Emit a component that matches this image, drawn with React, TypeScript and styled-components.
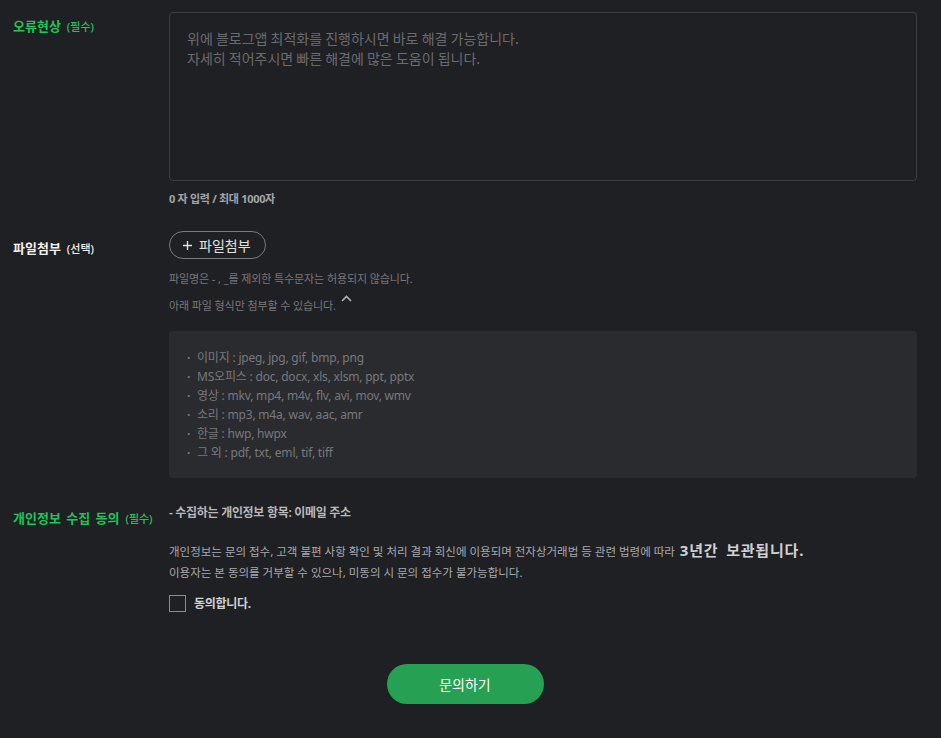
import React from "react";
import styled, { createGlobalStyle } from "styled-components";

const GlobalStyle = createGlobalStyle`
  html, body {
    margin: 0;
    padding: 0;
    background: #1f2023;
  }
  body {
    font-family: "Noto Sans", "Noto Sans CJK KR", sans-serif;
  }
`;

const Page = styled.div`
  width: 941px;
  height: 738px;
  box-sizing: border-box;
  padding: 12px 24px 0 13px;
  background: #1f2023;
  overflow: hidden;
`;

const Row = styled.div<{ $gap?: number }>`
  display: grid;
  grid-template-columns: 156px 1fr;
  margin-bottom: ${(p) => p.$gap ?? 0}px;
`;

const Label = styled.div<{ $green?: boolean; $top?: number }>`
  padding-top: ${(p) => p.$top ?? 0}px;
  font-size: 13px;
  font-weight: 700;
  color: ${(p) => (p.$green ? "#1fc45a" : "#f1f1f1")};
  word-spacing: 2px;
  white-space: nowrap;
`;

const Tag = styled.span`
  font-size: 11px;
  font-weight: 500;
  margin-left: 6px;
`;

const Field = styled.div`
  display: flex;
  flex-direction: column;
`;

const TextArea = styled.div`
  height: 169px;
  box-sizing: border-box;
  border: 1px solid #3d3e42;
  border-radius: 4px;
  padding: 15px 17px;
  font-family: "Noto Sans CJK KR", sans-serif;
  font-size: 14px;
  line-height: 20px;
  color: #6a6b6e;
`;

const Counter = styled.div`
  margin-top: 9px;
  font-size: 11px;
  font-weight: 700;
  color: #a4a5a8;
  letter-spacing: -0.3px;
`;

const AttachButton = styled.button`
  align-self: flex-start;
  height: 28px;
  margin-top: -2px;
  padding: 0 14px 0 12px;
  border: 1px solid #7a7b7e;
  border-radius: 14px;
  background: transparent;
  color: #e4e4e4;
  font-family: "Noto Sans CJK KR", sans-serif;
  font-size: 14px;
  display: flex;
  align-items: center;
  gap: 6px;
`;

const Hint = styled.div<{ $top: number }>`
  margin-top: ${(p) => p.$top}px;
  font-size: 11px;
  color: #77787b;
  letter-spacing: -0.1px;
  display: flex;
  align-items: center;
`;

const Caret = styled.svg`
  margin-left: 5px;
  margin-top: -14px;
`;

const FormatBox = styled.ul`
  list-style: none;
  margin: 18px 0 0;
  padding: 17px 18px 16px;
  background: #2a2b2f;
  border-radius: 4px;
  display: flex;
  flex-direction: column;
`;

const FormatItem = styled.li`
  font-size: 12px;
  line-height: 19px;
  color: #77787b;
  letter-spacing: -0.2px;
  &::before {
    content: "·";
    display: inline-block;
    width: 10px;
    font-weight: 700;
  }
`;

const Collected = styled.div`
  padding-top: 2px;
  font-size: 12px;
  font-weight: 600;
  color: #b8b9bc;
  letter-spacing: -0.3px;
`;

const Notice = styled.div`
  margin-top: 19px;
  font-size: 11.5px;
  line-height: 21px;
  color: #a8a9ac;
`;

const Strong = styled.span`
  font-size: 15px;
  font-weight: 700;
  color: #d0d1d4;
  margin-left: 5px;
  letter-spacing: 0.8px;
  word-spacing: 3px;
`;

const CheckRow = styled.label`
  margin-top: 11px;
  display: flex;
  align-items: center;
  gap: 8px;
  font-size: 12px;
  font-weight: 700;
  color: #d0d1d4;
  letter-spacing: -0.3px;
`;

const CheckBox = styled.span`
  width: 15px;
  height: 15px;
  border: 1px solid #8a8b8e;
  display: inline-block;
`;

const Footer = styled.div`
  display: flex;
  justify-content: center;
  margin-top: 52px;
`;

const SubmitButton = styled.button`
  width: 157px;
  height: 40px;
  border: none;
  border-radius: 20px;
  background: #26a052;
  color: #ffffff;
  font-family: "Noto Sans CJK KR", sans-serif;
  font-size: 14px;
`;

const formats = [
  "이미지 : jpeg, jpg, gif, bmp, png",
  "MS오피스 : doc, docx, xls, xlsm, ppt, pptx",
  "영상 : mkv, mp4, m4v, flv, avi, mov, wmv",
  "소리 : mp3, m4a, wav, aac, amr",
  "한글 : hwp, hwpx",
  "그 외 : pdf, txt, eml, tif, tiff",
];

const App = () => {
  return (
    <Page>
      <GlobalStyle />
      <Row $gap={27}>
        <Label $green $top={4}>
          오류현상<Tag>(필수)</Tag>
        </Label>
        <Field>
          <TextArea>
            위에 블로그앱 최적화를 진행하시면 바로 해결 가능합니다.
            <br />
            자세히 적어주시면 빠른 해결에 많은 도움이 됩니다.
          </TextArea>
          <Counter>0 자 입력 / 최대 1000자</Counter>
        </Field>
      </Row>

      <Row $gap={23}>
        <Label $top={5}>
          파일첨부<Tag>(선택)</Tag>
        </Label>
        <Field>
          <AttachButton>
            <svg width="11" height="11" viewBox="0 0 11 11">
              <path d="M5.5 1v9M1 5.5h9" stroke="#e4e4e4" strokeWidth="1.3" />
            </svg>
            파일첨부
          </AttachButton>
          <Hint $top={11}>파일명은 - , _를 제외한 특수문자는 허용되지 않습니다.</Hint>
          <Hint $top={11}>
            아래 파일 형식만 첨부할 수 있습니다.
            <Caret width="11" height="7" viewBox="0 0 11 7">
              <path d="M1 6l4.5-4.5L10 6" fill="none" stroke="#b0b1b4" strokeWidth="1.6" />
            </Caret>
          </Hint>
          <FormatBox>
            {formats.map((f) => (
              <FormatItem key={f}>{f}</FormatItem>
            ))}
          </FormatBox>
        </Field>
      </Row>

      <Row>
        <Label $green $top={7}>
          개인정보 수집 동의<Tag>(필수)</Tag>
        </Label>
        <Field>
          <Collected>- 수집하는 개인정보 항목: 이메일 주소</Collected>
          <Notice>
            개인정보는 문의 접수, 고객 불편 사항 확인 및 처리 결과 회신에 이용되며 전자상거래법 등 관련 법령에 따라
            <Strong>3년간 보관됩니다.</Strong>
            <br />
            이용자는 본 동의를 거부할 수 있으나, 미동의 시 문의 접수가 불가능합니다.
          </Notice>
          <CheckRow>
            <CheckBox />
            동의합니다.
          </CheckRow>
        </Field>
      </Row>

      <Footer>
        <SubmitButton>문의하기</SubmitButton>
      </Footer>
    </Page>
  );
};

export default App;
